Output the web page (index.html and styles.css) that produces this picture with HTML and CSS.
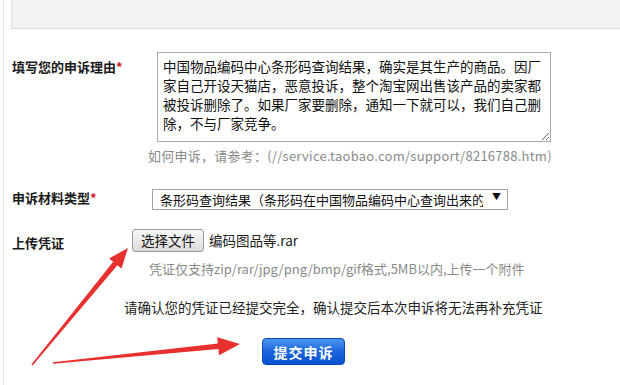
FILE: index.html
```html
<!DOCTYPE html>
<html lang="zh-CN">
  <head>
    <meta charset="UTF-8" />
    <title>申诉</title>
    <link rel="stylesheet" href="styles.css">
  </head>
  <body>
    <div class="frame">
      <div class="top-box"></div>

      <div class="form">
        <div class="row row-reason">
          <div class="label">填写您的申诉理由<span class="req">*</span></div>
          <textarea class="reason">中国物品编码中心条形码查询结果，确实是其生产的商品。因厂
家自己开设天猫店，恶意投诉，整个淘宝网出售该产品的卖家都
被投诉删除了。如果厂家要删除，通知一下就可以，我们自己删
除，不与厂家竞争。</textarea>
        </div>
        <div class="hint hint-reason">如何申诉，请参考：(//service.taobao.com/support/8216788.htm)</div>

        <div class="row row-type">
          <div class="label">申诉材料类型<span class="req">*</span></div>
          <span class="select-wrap">
            <select class="type-select">
              <option>条形码查询结果（条形码在中国物品编码中心查询出来的结果）</option>
            </select>
          </span>
        </div>

        <div class="row row-upload">
          <div class="label label-upload">上传凭证</div>
          <button class="file-btn">选择文件</button>
          <span class="file-name">编码图品等.rar</span>
        </div>
        <div class="hint hint-upload">凭证仅支持zip/rar/jpg/png/bmp/gif格式,5MB以内,上传一个附件</div>

        <div class="confirm">请确认您的凭证已经提交完全，确认提交后本次申诉将无法再补充凭证</div>
        <button class="submit">提交申诉</button>
      </div>
    </div>

    <svg class="arrows" width="620" height="385" viewBox="0 0 620 385">
      <polygon points="31.4,364.6 113.2,261.7 109.1,258.4 128,248 121.5,268.6 117.4,265.3 32.6,365.4" />
      <polygon points="52.9,362.2 217.8,343.4 217.2,337.2 240,344 219,355.2 218.4,349 53.1,363.8" />
    </svg>
  </body>
</html>
```

FILE: styles.css
```css
* {
  margin: 0;
  padding: 0;
  box-sizing: border-box;
}

body {
  font-family: "Noto Sans CJK SC", "Noto Sans", sans-serif;
  background-color: #fff;
  color: #222;
  width: 620px;
  height: 385px;
  overflow: hidden;
  position: relative;
}

.frame {
  margin-left: 3px;
  border-left: 1px solid #e8e8e8;
  height: 385px;
}

.top-box {
  margin-left: 7px;
  height: 29px;
  background-color: #f2f2f2;
  border-left: 1px solid #dedede;
  border-bottom: 1px solid #dcdcdc;
}

.form {
  padding-left: 8px;
}

.row {
  display: flex;
}

.label {
  width: 120px;
  font-size: 13px;
  font-weight: 700;
  line-height: 20px;
  color: #1a1a1a;
  white-space: nowrap;
}

.req {
  color: #d0202a;
}

.row-reason {
  margin-top: 23px;
}

.row-reason .label {
  padding-top: 5px;
}

.reason {
  margin-left: 25px;
  width: 394px;
  height: 90px;
  border: 1px solid #a9a9a9;
  padding: 4px 5px;
  font-family: inherit;
  font-size: 13.5px;
  line-height: 19px;
  color: #111;
  white-space: pre;
  overflow: hidden;
}

.hint {
  font-size: 13px;
  line-height: 18px;
  color: #8a8a8a;
  white-space: nowrap;
}

.hint-reason {
  margin-top: 5px;
  margin-left: 136px;
  letter-spacing: 0.25px;
}

.row-type {
  margin-top: 21px;
  align-items: center;
}

.select-wrap {
  position: relative;
  margin-left: 20px;
}

.select-wrap::after {
  content: "▼";
  position: absolute;
  right: 7px;
  top: 4px;
  font-size: 9px;
  color: #111;
  pointer-events: none;
}

.type-select {
  appearance: none;
  width: 356px;
  height: 21px;
  border: 1px solid #a5a5a5;
  background-color: #fff;
  padding: 0 24px 0 7px;
  font-family: inherit;
  font-size: 13px;
  line-height: 19px;
  color: #111;
}

.row-upload {
  margin-top: 17px;
  align-items: center;
}

.label-upload {
  padding-top: 6px;
}

.file-btn {
  width: 72px;
  height: 23px;
  border: 1px solid #9c9c9c;
  border-radius: 3px;
  background: linear-gradient(#f7f7f7, #dcdcdc);
  font-family: inherit;
  font-size: 13.5px;
  color: #111;
}

.file-name {
  margin-left: 5px;
  font-size: 13.5px;
  color: #222;
}

.hint-upload {
  margin-top: 7px;
  margin-left: 137px;
}

.confirm {
  margin-top: 20px;
  margin-left: 112px;
  font-size: 13.5px;
  line-height: 18px;
  color: #222;
  white-space: nowrap;
}

.submit {
  display: block;
  margin-top: 22px;
  margin-left: 250px;
  width: 83px;
  height: 27px;
  border: 1px solid #0b47b4;
  border-radius: 4px;
  background: linear-gradient(#4a95ee, #1b66de 50%, #0a52cf);
  color: #fff;
  font-family: inherit;
  font-size: 14px;
  font-weight: 700;
  letter-spacing: 1px;
}

.arrows {
  position: absolute;
  left: 0;
  top: 0;
  pointer-events: none;
}

.arrows polygon {
  fill: #e8302e;
}
```
